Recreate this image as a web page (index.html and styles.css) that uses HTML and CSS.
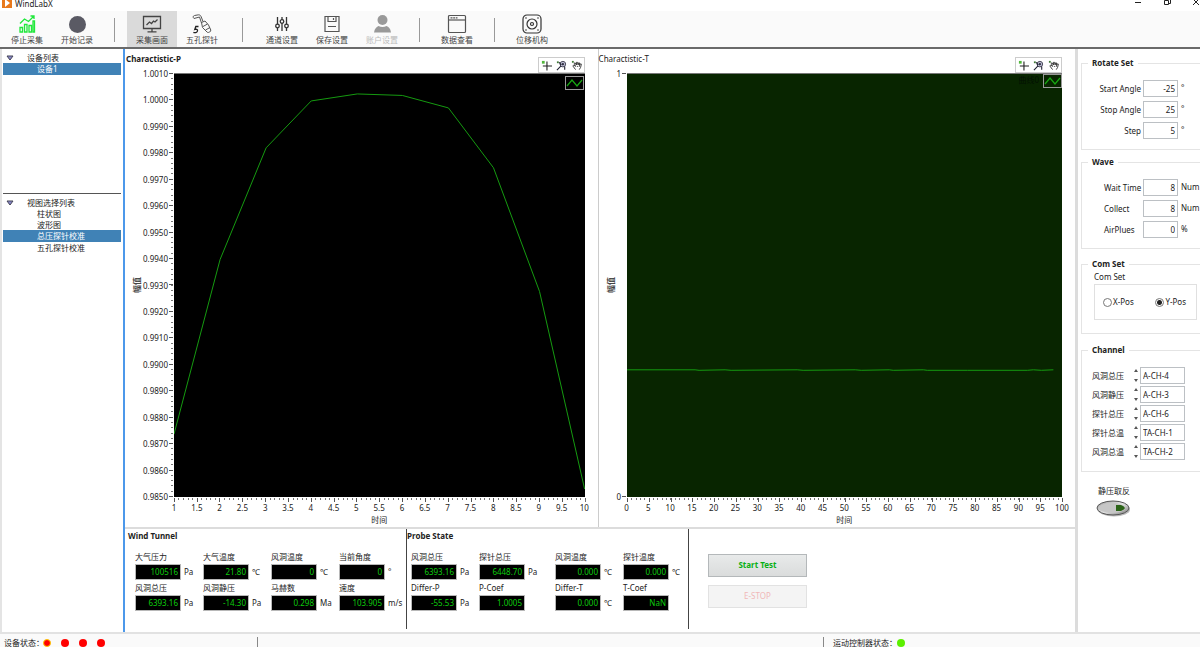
FILE: index.html
```html
<!DOCTYPE html>
<html lang="zh-CN">
<head>
<meta charset="utf-8">
<title>WindLabX</title>
<link rel="stylesheet" href="styles.css">
</head>
<body>
<svg class="defs" aria-hidden="true">
  <symbol id="i-cross" viewBox="0 0 12 12"><path d="M6.500 1.500v10M2 6.500h10" fill="none" stroke="#222" stroke-width="1.200"/><path d="M1 1h3v3H1z" fill="#52b83c"/></symbol>
  <symbol id="i-zoom" viewBox="0 0 12 12"><path d="M1 1.500h2v2H1z" fill="#427a38"/><circle cx="7.500" cy="4.500" r="3" fill="#d8d8f0" stroke="#334"/><path d="M6 4.500h3M7.500 3v3M5.500 6.500L1 11M9.500 7v3.500M3.500 2.500l2 3" fill="none" stroke="#223" stroke-width="1.200"/></symbol>
  <symbol id="i-hand" viewBox="0 0 12 12"><path d="M1 1h2v2H1z" fill="#427a38"/><path d="M5 10.500L2 6.500 3 5.500 5 7 3.500 3.500 4.500 3 6 5.500V2.500h1l.8 3 .5-2.500 1 .2v3L10.500 4l.8.5-.8 3.500L9 10.500M7 6.500v1M9 6.500v1" fill="none" stroke="#333"/></symbol>
  <symbol id="i-legend" viewBox="0 0 17 12"><path d="M1 9l5-6 5 6 5-6" fill="none" stroke="#18a812" stroke-width="1.200"/></symbol>
</svg>

<header class="titlebar">
  <svg class="logo" viewBox="0 0 10 10"><path d="M0 0h10v10H0z" fill="#e8791c"/><path d="M3 1l5 4-5 4z" fill="#fff"/></svg>
  <span class="app-name">WindLabX</span>
  <button class="win" aria-label="最小化"><svg viewBox="0 0 10 10"><path d="M2 5.500h6" stroke="#222" fill="none"/></svg></button>
  <button class="win" aria-label="还原"><svg viewBox="0 0 10 10"><path d="M2.500 3.500h4v4h-4zM4 3.500V2h4.500v4.500H7" stroke="#222" fill="none"/></svg></button>
  <button class="win" aria-label="关闭"><svg viewBox="0 0 10 10"><path d="M2 2l6 6M8 2L2 8" stroke="#222" fill="none"/></svg></button>
</header>

<nav class="toolbar">
  <button class="tool"><svg viewBox="0 0 20 20"><g fill="none" stroke="#1fe83a" stroke-width="1.300"><path d="M3 13.500h2.500V18H3zM7.500 10.500H10V18H7.500zM12 11.500h2.500V18H12zM16 7h1.500v11H16zM3 9.500l4.500-4.500 4 2.500 5-5M13.500 2h3.500v3"/></g></svg>停止采集</button>
  <button class="tool"><svg viewBox="0 0 20 20"><circle cx="10.500" cy="10.500" r="8.500" fill="#5a5a64"/></svg>开始记录</button>
  <i class="sep"></i>
  <button class="tool is-active"><svg viewBox="0 0 20 20"><g fill="none" stroke="#444" stroke-width="1.300"><path d="M1.500 2.500h17v12h-17zM10 14.500v3M5.500 17.800h9"/><path d="M4.500 11l3-3 2 1.500 2-2.500 1.500 1L15.500 5.500"/></g></svg>采集画面</button>
  <button class="tool"><svg viewBox="0 0 20 20"><g fill="none" stroke="#555"><path d="M7.500 3L2 4.500C.7 3.500 1 1.800 2.500 1.500L6.500.8c1.500 0 2.200.8 2.700 2L11 7.500M7.500 3L9.500 9M9.500 8.500l3.500-1.500 3.500 4 2.300 5c.2 1.500-1.800 3-3.500 2.300L10.500 13.500zM11 12.500l4.500-2.500M13.500 16l4.500-2.500"/></g><path d="M6.500 12.500H3.800l-1 3c2-.7 3.200.3 2.600 1.600-.5 1.500-2.500 1.900-4 1.200" fill="none" stroke="#222" stroke-width="1.300"/></svg>五孔探针</button>
  <i class="sep sep-wide"></i>
  <button class="tool"><svg viewBox="0 0 20 20"><g fill="#fafafa" stroke="#333" stroke-width="1.300"><path d="M5.500 3v14M10 3v14M14.500 3v14"/><circle cx="5.500" cy="12" r="1.800"/><circle cx="10" cy="7.500" r="1.800"/><circle cx="14.500" cy="12" r="1.800"/></g></svg>通道设置</button>
  <button class="tool"><svg viewBox="0 0 20 20"><g fill="none" stroke="#555" stroke-width="1.200"><path d="M3 2.500h14v15H3zM6 2.500v5h8v-5M11.500 4v2M6 12.500h8"/></g></svg>保存设置</button>
  <button class="tool" disabled><svg viewBox="0 0 20 20"><g fill="#999"><circle cx="10.500" cy="6" r="5"/><path d="M2 18.500c.5-4 3-6 4.500-6.500 2.500 1.200 5.500 1.200 8 0 2 .5 4 2.500 4.500 6.500z"/></g></svg>账户设置</button>
  <i class="sep"></i>
  <button class="tool"><svg viewBox="0 0 20 20"><g fill="none" stroke="#555" stroke-width="1.200"><rect x="1.500" y="1.500" width="17" height="17" rx="1"/><path d="M1.500 6h17"/><path d="M3.500 3.800h7" stroke-dasharray="2 .7"/></g></svg>数据查看</button>
  <i class="sep"></i>
  <button class="tool"><svg viewBox="0 0 20 20"><g fill="none" stroke="#333" stroke-width="1.200"><rect x="1" y="1" width="18" height="18" rx="4"/><circle cx="10" cy="10" r="5"/><circle cx="10" cy="10" r="1.500"/></g><g fill="#333"><circle cx="4" cy="4" r=".8"/><circle cx="16" cy="4" r=".8"/><circle cx="4" cy="16" r=".8"/><circle cx="16" cy="16" r=".8"/></g></svg>位移机构</button>
</nav>

<div class="workspace">
  <aside class="sidebar">
    <section class="tree tree-devices">
      <h2 class="tree-head"><svg class="caret" viewBox="0 0 8 6"><path d="M1 1h6L4 5z" fill="#8888cc" stroke="#445"/></svg>设备列表</h2>
      <ul><li class="is-selected">设备1</li></ul>
    </section>
    <section class="tree">
      <h2 class="tree-head"><svg class="caret" viewBox="0 0 8 6"><path d="M1 1h6L4 5z" fill="#8888cc" stroke="#445"/></svg>视图选择列表</h2>
      <ul><li>柱状图</li><li>波形图</li><li class="is-selected">总压探针校准</li><li>五孔探针校准</li></ul>
    </section>
  </aside>

  <main class="main">
    <div class="charts">
      <section class="chart chart-p">
        <header class="chart-head">
          <h2 class="chart-title">Charactistic-P</h2>
          <div class="palette">
            <button aria-label="光标"><svg><use href="#i-cross"/></svg></button><button aria-label="缩放"><svg><use href="#i-zoom"/></svg></button><button aria-label="平移"><svg><use href="#i-hand"/></svg></button>
          </div>
        </header>
        <div class="y-axis">
          <span class="y-title">幅值</span>
          <div class="y-labels"><span>1.0010</span><span>1.0000</span><span>0.9990</span><span>0.9980</span><span>0.9970</span><span>0.9960</span><span>0.9950</span><span>0.9940</span><span>0.9930</span><span>0.9920</span><span>0.9910</span><span>0.9900</span><span>0.9890</span><span>0.9880</span><span>0.9870</span><span>0.9860</span><span>0.9850</span></div>
          <div class="y-ticks"></div>
        </div>
        <div class="plot">
          <svg class="curve" viewBox="0 0 410 424" preserveAspectRatio="none"><path d="M0 361L46 186 92 74 137 27 183 20 228 21.500 274 34 319 94 365 218 410 416"/></svg>
          <svg class="legend"><use href="#i-legend"/></svg>
        </div>
        <div class="x-axis">
          <div class="x-ticks"></div>
          <div class="x-labels"><span>1</span><span>1.5</span><span>2</span><span>2.5</span><span>3</span><span>3.5</span><span>4</span><span>4.5</span><span>5</span><span>5.5</span><span>6</span><span>6.5</span><span>7</span><span>7.5</span><span>8</span><span>8.5</span><span>9</span><span>9.5</span><span>10</span></div>
          <div class="x-title">时间</div>
        </div>
      </section>

      <section class="chart chart-t">
        <header class="chart-head">
          <h2 class="chart-title">Charactistic-T</h2>
          <div class="palette">
            <button aria-label="光标"><svg><use href="#i-cross"/></svg></button><button aria-label="缩放"><svg><use href="#i-zoom"/></svg></button><button aria-label="平移"><svg><use href="#i-hand"/></svg></button>
          </div>
        </header>
        <div class="y-axis">
          <span class="y-title">幅值</span>
          <div class="y-labels"><span>1</span><span>0</span></div>
          <div class="y-ticks"></div>
        </div>
        <div class="plot">
          <svg class="curve" viewBox="0 0 435 424" preserveAspectRatio="none"><path d="M0 296.500H68L72 297 98 296.500 104 297 170 296.500 176 297 228 296.500 234 297 262 296.500 266 297 296 296.500 300 297 340 297 400 297 406 296.500 414 297 426 296.500"/></svg>
          <span class="legend-name">曲线0</span>
          <svg class="legend"><use href="#i-legend"/></svg>
        </div>
        <div class="x-axis">
          <div class="x-ticks"></div>
          <div class="x-labels"><span>0</span><span>5</span><span>10</span><span>15</span><span>20</span><span>25</span><span>30</span><span>35</span><span>40</span><span>45</span><span>50</span><span>55</span><span>60</span><span>65</span><span>70</span><span>75</span><span>80</span><span>85</span><span>90</span><span>95</span><span>100</span></div>
          <div class="x-title">时间</div>
        </div>
      </section>
    </div>

    <div class="readouts">
      <section class="group group-wind">
        <h2>Wind Tunnel</h2>
        <div class="fields">
          <div class="field"><label for="w1">大气压力</label><output id="w1">100516</output><span>Pa</span></div>
          <div class="field"><label for="w2">大气温度</label><output id="w2">21.80</output><span>℃</span></div>
          <div class="field"><label for="w3">风洞温度</label><output id="w3">0</output><span>℃</span></div>
          <div class="field"><label for="w4">当前角度</label><output id="w4">0</output><span>°</span></div>
          <div class="field"><label for="w5">风洞总压</label><output id="w5">6393.16</output><span>Pa</span></div>
          <div class="field"><label for="w6">风洞静压</label><output id="w6">-14.30</output><span>Pa</span></div>
          <div class="field"><label for="w7">马赫数</label><output id="w7">0.298</output><span>Ma</span></div>
          <div class="field"><label for="w8">速度</label><output id="w8">103.905</output><span>m/s</span></div>
        </div>
      </section>
      <section class="group group-probe">
        <h2>Probe State</h2>
        <div class="fields">
          <div class="field"><label for="p1">风洞总压</label><output id="p1">6393.16</output><span>Pa</span></div>
          <div class="field"><label for="p2">探针总压</label><output id="p2">6448.70</output><span>Pa</span></div>
          <div class="field"><label for="p3">风洞温度</label><output id="p3">0.000</output><span>℃</span></div>
          <div class="field"><label for="p4">探针温度</label><output id="p4">0.000</output><span>℃</span></div>
          <div class="field"><label for="p5">Differ-P</label><output id="p5">-55.53</output><span>Pa</span></div>
          <div class="field"><label for="p6">P-Coef</label><output id="p6">1.0005</output></div>
          <div class="field"><label for="p7">Differ-T</label><output id="p7">0.000</output><span>℃</span></div>
          <div class="field"><label for="p8">T-Coef</label><output id="p8">NaN</output></div>
        </div>
      </section>
      <div class="actions">
        <button class="action action-start">Start Test</button>
        <button class="action action-stop" disabled>E-STOP</button>
      </div>
    </div>
  </main>

  <aside class="settings">
    <fieldset class="set set-rotate">
      <legend>Rotate Set</legend>
      <div class="row"><label for="a1">Start Angle</label><input id="a1" type="text" value="-25"><span>°</span></div>
      <div class="row"><label for="a2">Stop Angle</label><input id="a2" type="text" value="25"><span>°</span></div>
      <div class="row"><label for="a3">Step</label><input id="a3" type="text" value="5"><span>°</span></div>
    </fieldset>
    <fieldset class="set set-wave">
      <legend>Wave</legend>
      <div class="row"><label for="b1">Wait Time</label><input id="b1" type="text" value="8"><span>Num</span></div>
      <div class="row"><label for="b2">Collect</label><input id="b2" type="text" value="8"><span>Num</span></div>
      <div class="row"><label for="b3">AirPlues</label><input id="b3" type="text" value="0"><span>%</span></div>
    </fieldset>
    <fieldset class="set set-com">
      <legend>Com Set</legend>
      <p class="com-label" id="com-label">Com Set</p>
      <div class="radios" role="radiogroup" aria-labelledby="com-label">
        <label><input type="radio" name="pos">X-Pos</label>
        <label><input type="radio" name="pos" checked>Y-Pos</label>
      </div>
    </fieldset>
    <fieldset class="set set-channel">
      <legend>Channel</legend>
      <div class="channel"><label for="c1">风洞总压</label><span class="spin"><button aria-label="上一项"></button><button aria-label="下一项"></button></span><input id="c1" type="text" value="A-CH-4"></div>
      <div class="channel"><label for="c2">风洞静压</label><span class="spin"><button aria-label="上一项"></button><button aria-label="下一项"></button></span><input id="c2" type="text" value="A-CH-3"></div>
      <div class="channel"><label for="c3">探针总压</label><span class="spin"><button aria-label="上一项"></button><button aria-label="下一项"></button></span><input id="c3" type="text" value="A-CH-6"></div>
      <div class="channel"><label for="c4">探针总温</label><span class="spin"><button aria-label="上一项"></button><button aria-label="下一项"></button></span><input id="c4" type="text" value="TA-CH-1"></div>
      <div class="channel"><label for="c5">风洞总温</label><span class="spin"><button aria-label="上一项"></button><button aria-label="下一项"></button></span><input id="c5" type="text" value="TA-CH-2"></div>
    </fieldset>
    <div class="invert">
      <label for="inv">静压取反</label>
      <button id="inv" class="switch" aria-pressed="false"><svg viewBox="0 0 35 17"><defs><linearGradient id="metal" x2="1" y2="1"><stop offset="0" stop-color="#999"/><stop offset=".5" stop-color="#e4e4e4"/><stop offset="1" stop-color="#777"/></linearGradient></defs><ellipse cx="18" cy="9.500" rx="16" ry="7" fill="#bbb"/><ellipse cx="17" cy="8" rx="16" ry="7" fill="url(#metal)" stroke="#555"/><ellipse cx="16" cy="8" rx="13" ry="5" fill="#c6c6c6"/><path d="M20 5h5q3 1 4 3-1 2-4 3h-5z" fill="#2c6418"/></svg></button>
    </div>
  </aside>
</div>

<footer class="statusbar">
  <div class="status status-device">设备状态：<i class="dot dot-ring"></i><i class="dot"></i><i class="dot"></i><i class="dot"></i></div>
  <div class="status status-motion">运动控制器状态：<i class="dot dot-on"></i></div>
</footer>
</body>
</html>
```
FILE: styles.css
```css
* { box-sizing: border-box; }

body {
  margin: 0;
  min-height: 100vh;
  display: flex;
  flex-direction: column;
  background: #fff;
  color: #222;
  font: 8px/12px "Noto Sans", "Noto Sans CJK SC", sans-serif;
  overflow-x: hidden;
}

h2, p, ul { margin: 0; padding: 0; font-size: 8px; list-style: none; }
button, input { font: inherit; color: inherit; margin: 0; padding: 0; border: 0; background: none; }
svg { display: block; }
.defs { width: 0; height: 0; position: absolute; }

/* Title bar */
.titlebar { display: flex; align-items: flex-start; height: 11px; padding-left: 2px; }
.logo { width: 10px; height: 10px; margin-top: -2px; }
.app-name { flex: 1; margin-left: 3px; line-height: 7px; }
.win { width: 10px; height: 10px; margin: -3px 0 0 19px; }
.win:last-child { margin-right: -1px; }

/* Toolbar */
.toolbar { display: flex; height: 38px; padding-left: 2px; background: #fafafa; border-bottom: 2px solid #6a6a6a; }
.tool { width: 50px; display: flex; flex-direction: column; align-items: center; padding-top: 3px; color: #444; }
.tool svg { width: 20px; height: 20px; }
.tool.is-active { background: #dadada; }
.tool:disabled { color: #bbb; }
.sep { width: 25px; margin: 7px 0 5px; background: linear-gradient(#999, #999) center / 1px 100% no-repeat; }
.sep-wide { width: 30px; }

.workspace { flex: 1; display: flex; }

/* Sidebar */
.sidebar { width: 125px; padding: 3px 2px 0 1px; border-left: 2px solid #e4e4e4; border-right: 2px solid #4c98ea; }
.tree { line-height: 11px; }
.tree-devices { min-height: 142px; margin-bottom: 3px; border-bottom: 1px solid #555; }
.tree-head { display: flex; align-items: center; gap: 13px; padding-left: 3px; font-weight: 400; }
.caret { width: 8px; height: 6px; }
.tree li { padding-left: 34px; }
.tree li.is-selected { background: #4082b6; color: #fff; line-height: 12px; }

/* Charts */
.main { flex: 1; min-width: 0; display: flex; flex-direction: column; border-right: 3px solid #dcdcdc; }
.charts { flex: 1; display: grid; grid-template-columns: 99fr 100fr; border-bottom: 2px solid #dcdcdc; }
.chart { min-width: 0; display: grid; grid-template-rows: 24px 1fr 30px; padding-right: 13px; }
.chart-p { grid-template-columns: 49px 1fr; }
.chart-t { grid-template-columns: 28px 1fr; border-left: 1px solid #ccc; }
.chart-head { grid-column: 1 / -1; display: flex; align-items: flex-end; justify-content: space-between; }
.chart-title { align-self: flex-start; padding: 4px 0 0 1px; }
.chart-t .chart-title { padding-left: 0; font-weight: 400; }
.palette { display: flex; height: 16px; align-items: center; border: 1px solid #ccc; }
.palette button { width: 15px; padding: 0 2px; }
.palette svg { width: 11px; height: 11px; }
.y-axis { display: flex; justify-content: flex-end; }
.y-title { align-self: center; margin-right: auto; margin-left: 6px; writing-mode: vertical-rl; text-orientation: sideways; transform: rotate(180deg); font-weight: 700; color: #444; }
.y-labels { display: flex; flex-direction: column; justify-content: space-between; text-align: right; margin-right: 1px; }
.y-labels span { height: 1px; line-height: 1px; }
.y-ticks {
  width: 5px;
  background:
    repeating-linear-gradient(#555 0 1px, transparent 1px calc((100% - 1px) / 16)) left / 4px 100% no-repeat,
    repeating-linear-gradient(#777 0 1px, transparent 1px calc((100% - 1px) / 80)) 2px 0 / 2px 100% no-repeat;
}
.chart-t .y-ticks { background: linear-gradient(#555, #555) left top / 4px 1px no-repeat, linear-gradient(#555, #555) left bottom / 4px 1px no-repeat; }
.plot { position: relative; background: #000; border-top: 1px solid #777; }
.chart-t .plot { background: #082500; }
.curve { position: absolute; inset: 0; width: 100%; height: 100%; }
.curve path { fill: none; stroke: #159a10; stroke-width: 1; vector-effect: non-scaling-stroke; }
.legend { position: absolute; top: 2px; right: 1px; width: 19px; height: 14px; border: 1px solid #999; }
.chart-t .legend { top: 0; right: 0; }
.legend-name { position: absolute; top: 0; right: 23px; color: #021002; }
.x-axis { grid-column: 2; padding-top: 1px; }
.x-ticks {
  height: 4px;
  margin-right: -1px;
  background:
    repeating-linear-gradient(to right, #555 0 1px, transparent 1px calc((100% - 1px) / 18)) top / 100% 4px no-repeat,
    repeating-linear-gradient(to right, #777 0 1px, transparent 1px calc((100% - 1px) / 90)) top / 100% 2px no-repeat;
}
.chart-t .x-ticks {
  background:
    repeating-linear-gradient(to right, #555 0 1px, transparent 1px calc((100% - 1px) / 20)) top / 100% 4px no-repeat,
    repeating-linear-gradient(to right, #777 0 1px, transparent 1px calc((100% - 1px) / 100)) top / 100% 2px no-repeat;
}
.x-labels { display: flex; justify-content: space-between; }
.x-labels span { width: 0; display: flex; justify-content: center; }
.x-title { text-align: center; }

/* Readouts */
.readouts { display: flex; padding-bottom: 3px; }
.group { width: 282px; min-height: 100px; border-right: 1px solid #444; }
.group-wind { padding-left: 3px; }
.group h2 { line-height: 13px; }
.fields { display: grid; grid-template-columns: 68px 68px 68px 68px; row-gap: 2px; padding: 9px 0 0 7px; }
.group-probe .fields { grid-template-columns: 68px 76px 68px 60px; padding-left: 4px; }
.field { display: grid; grid-template-columns: 46px auto; grid-template-rows: 13px 16px; column-gap: 3px; justify-content: start; }
.field label { grid-column: 1 / -1; }
.field output { background: #000; border: 1px solid #b8b8b8; color: #0ccc0c; text-align: right; padding-right: 2px; line-height: 14px; }
.field span { line-height: 16px; }
.actions { flex: 1; display: flex; flex-direction: column; align-items: flex-start; gap: 8px; padding: 25px 0 0 19px; }
.action { width: 99px; height: 23px; border: 1px solid #b4b8ba; background: linear-gradient(#e8eaea, #dadcdc); line-height: 10px; padding-bottom: 2px; }
.action-start { color: #08b014; font-weight: 700; }
.action-stop { color: #f0b8b8; border-color: #e2e2e2; background: #f4f4f4; }

/* Settings */
.settings { width: 122px; padding: 8px 0 0 3px; }
.set { min-width: 0; margin: 0; padding: 0; border: 1px solid #e4e4e4; border-right: 0; }
.set legend { margin-left: 6px; padding: 0 4px; font-weight: 700; line-height: 12px; }
.set-rotate, .set-wave { height: 93px; padding-top: 11px; margin-bottom: 6px; }
.row { display: grid; grid-template-columns: 59px 35px auto; column-gap: 2px; justify-content: start; height: 17px; margin-bottom: 4px; line-height: 17px; white-space: nowrap; }
.row label { text-align: right; }
.row input, .channel input { border: 1px solid #bcc0c4; height: 17px; }
.row input { width: 35px; text-align: right; padding-right: 2px; }
.row span { padding-left: 1px; line-height: 16px; }
.set-wave .row label { text-align: left; padding-left: 22px; }
.set-com { height: 76px; margin: 9px 0 10px; }
.com-label { padding: 1px 0 0 12px; }
.radios { display: flex; justify-content: space-between; align-items: center; height: 36px; margin: 1px 3px 0 12px; padding: 0 10px 0 8px; border: 1px solid #e0e0e0; }
.radios label { display: flex; align-items: center; gap: 1px; }
.radios input { appearance: none; width: 9px; height: 9px; border: 1px solid #777; border-radius: 50%; }
.radios input:checked { background: radial-gradient(#222 0 2px, #fff 3px); }
.set-channel { height: 128px; padding-top: 11px; }
.channel { display: grid; grid-template-columns: 39px 7px 45px; column-gap: 1px; height: 17px; margin: 0 0 2px 10px; line-height: 17px; }
.channel input { width: 45px; padding-left: 2px; }
.spin { display: flex; flex-direction: column; justify-content: space-between; align-items: center; padding: 2px 0; }
.spin button { width: 0; height: 0; border: 2px solid transparent; border-top: 0; border-bottom: 3px solid #555; }
.spin button + button { border-bottom: 0; border-top: 3px solid #555; }
.invert { width: 35px; margin: 13px 0 0 15px; white-space: nowrap; }
.invert label { display: block; padding-left: 2px; }
.switch { display: block; width: 35px; height: 17px; margin-top: 3px; }

/* Status bar */
.statusbar { display: flex; justify-content: space-between; height: 15px; border-top: 2px solid #e2e2e2; background: #fafafa; }
.status { display: flex; align-items: center; padding-top: 4px; line-height: 10px; }
.status-device { width: 258px; padding-left: 4px; gap: 10px; background: linear-gradient(#888, #888) right 3px / 1px 100% no-repeat; }
.status-motion { width: 377px; padding-left: 10px; background: linear-gradient(#888, #888) left 3px / 1px 100% no-repeat; }
.dot { width: 8px; height: 8px; border-radius: 50%; background: #f00; }
.dot-ring { border: 1px solid #fc0; margin-left: -11px; }
.dot-on { background: #5cf000; }
```
